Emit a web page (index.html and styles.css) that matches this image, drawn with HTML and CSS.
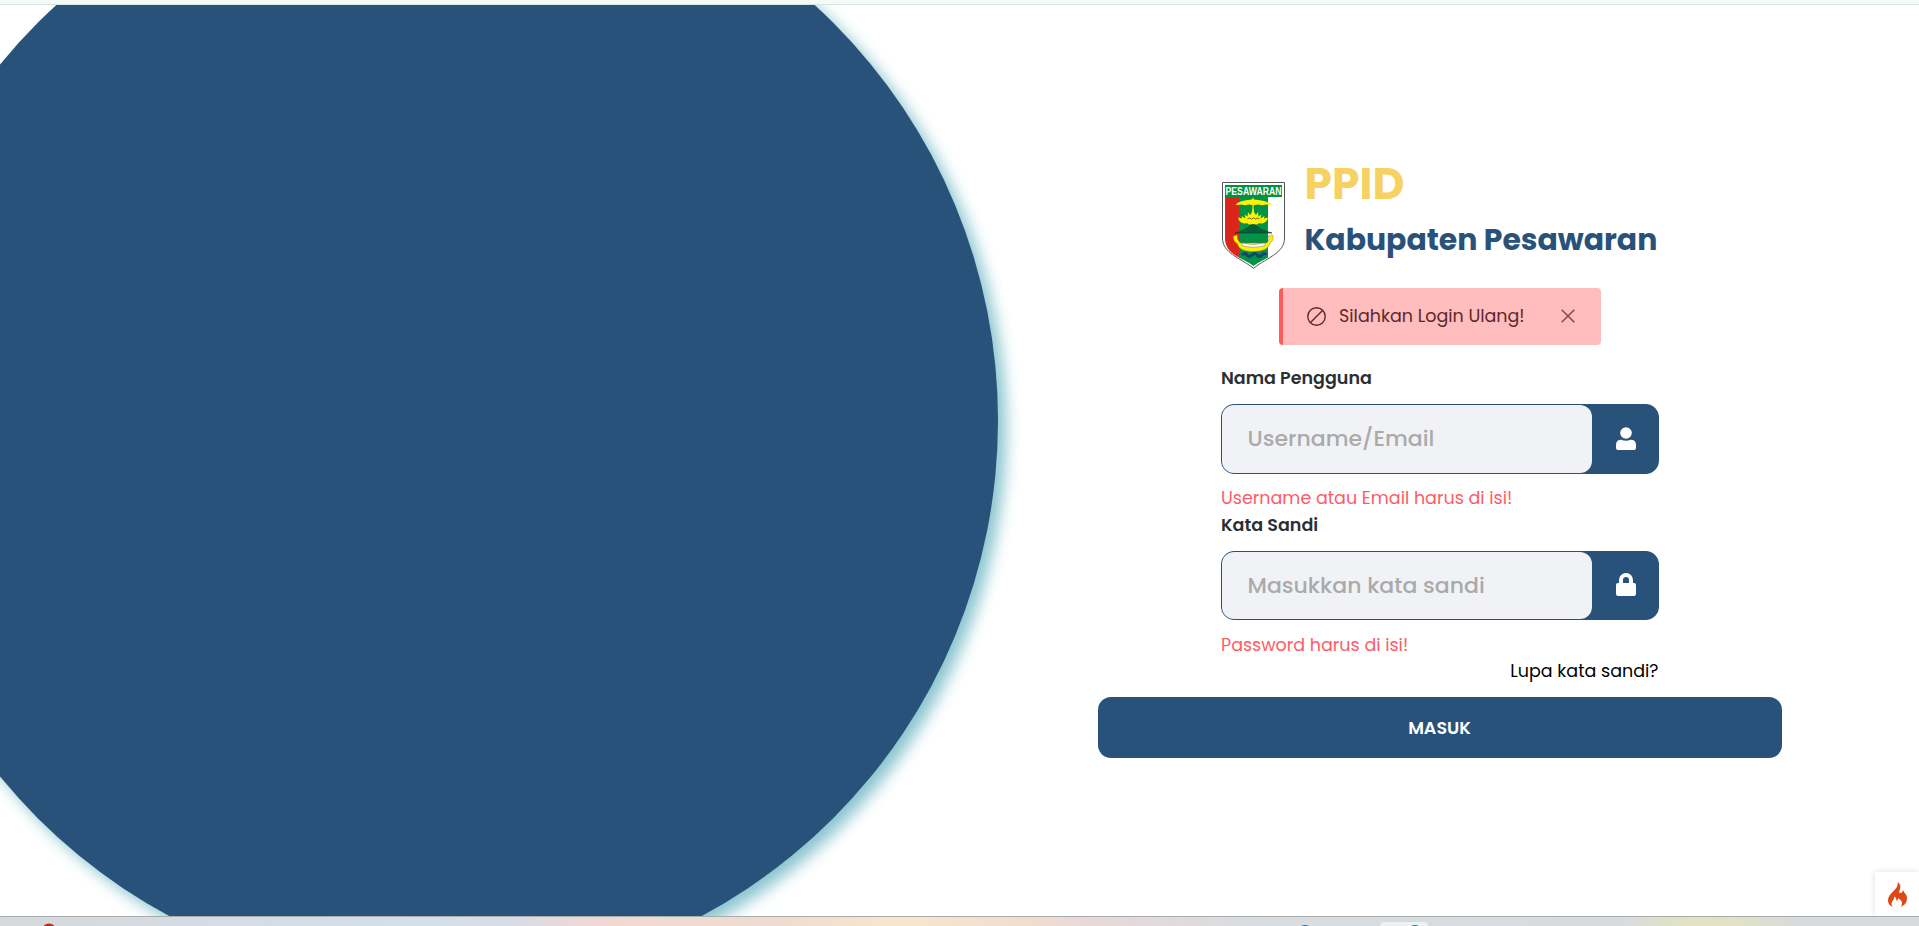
FILE: index.html
```html
<!DOCTYPE html>
<html lang="id">
<head>
<meta charset="utf-8">
<title>PPID Kabupaten Pesawaran</title>
<link rel="stylesheet" href="styles.css">
</head>
<body>
<div class="window-top"></div>
<main class="stage">
  <div class="disc"></div>
  <section class="panel">
    <header class="brand">
      <svg class="crest" viewBox="0 0 63 87">
        <path d="M.5.5h62V56C62.500 71 46 75 31.500 86.300 17 75 .500 71 .500 56z" fill="#fff" stroke="#555" stroke-width="1"/>
        <path d="M3 3h57v12H3z" fill="#009245"/>
        <path d="M3 15h14v60.500C8 71 3 65 3 56z" fill="#da251d"/>
        <path d="M17 15h29v60.500C41 78 36 80.500 31.500 84 27 80.500 22 78 17 75.500z" fill="#009245"/>
        <text class="crest-name" x="31.500" y="13.300" textLength="56" lengthAdjust="spacingAndGlyphs">PESAWARAN</text>
        <path d="M13.500 22.500Q17 18.500 30 17.500l1-2 1 2q13 1 18 5l-3 .5-3-.5-4 .8-4-.8-4.500.8-4.500-.8-4 .8-4-.8-3 .5z" fill="#fff200"/>
        <path d="M31 23v9" stroke="#fff200" stroke-width="1.200"/>
        <path d="M31 26l1.500 5 1.500 2 2-3 .5 4.500 3-2-1 4 4-2.500-.5 2.500 4-1q-1 5-6 6-3.500-1-5 1-2-.5-4 1-2-1.500-4-1-1.500-2-5-1-5-1-6-6l4 1-.5-2.500 4 2.500-1-4 3 2 .5-4.500 2 3 1.500-2z" fill="#fff200"/>
        <path d="M25.500 37l2-1 2 1 2-1 2 1 2-1 2 1" fill="none" stroke="#6d7418" stroke-width="1"/>
        <path d="M13 51q10-2 16.500-8.500h3Q40 49 50 51z" fill="#00603a" stroke="#17382a" stroke-width=".6"/>
        <path d="M11.500 54l4-1q-1 5 3 8h26q4-3 2-7l4-1q2 5-2.500 8-2 8.500-16.500 8.500T15.500 62q-5-3-4-8z" fill="#fff200" stroke="#a77b1c" stroke-width=".5"/>
        <path d="M20 61q11 3 23 0v2.500q-12 3.500-23 0z" fill="#fff" stroke="#777" stroke-width=".5"/>
        <path d="M20 73q3-3 5 0t5 0 5 0 5 0 4 0" fill="none" stroke="#164377" stroke-width="3"/>
      </svg>
      <div class="brand-text">
        <h1 class="brand-title">PPID</h1>
        <h2 class="brand-sub">Kabupaten Pesawaran</h2>
      </div>
    </header>
    <div class="alert">
      <svg class="alert-ban" viewBox="0 0 19 19"><circle cx="9.500" cy="9.500" r="8.700"/><path d="M3.500 15.500l12-12"/></svg>
      <span class="alert-text">Silahkan Login Ulang!</span>
      <svg class="alert-close" viewBox="0 0 14 14"><path d="M.7.7l12.600 12.600M13.300.7L.7 13.300"/></svg>
    </div>
    <form class="form">
      <label class="label">Nama Pengguna</label>
      <div class="field">
        <div class="input">Username/Email</div>
        <svg class="field-icon" viewBox="0 0 20 23"><circle cx="10" cy="6" r="5.800"/><path d="M5.300 12.800q4.700 2 9.400 0Q20 12.800 20 18v3q0 2-2 2H2q-2 0-2-2v-3q0-5.200 5.300-5.200z"/></svg>
      </div>
      <p class="error">Username atau Email harus di isi!</p>
      <label class="label label-next">Kata Sandi</label>
      <div class="field">
        <div class="input">Masukkan kata sandi</div>
        <svg class="field-icon" viewBox="0 0 20 23"><path fill-rule="evenodd" d="M3 10V7a7 7 0 0 1 14 0v3h1q2 0 2 2v9q0 2-2 2H2q-2 0-2-2v-9q0-2 2-2zm4 0h6V7a3 3 0 0 0-6 0z"/></svg>
      </div>
      <p class="error">Password harus di isi!</p>
      <a class="forgot">Lupa kata sandi?</a>
    </form>
    <button class="submit">MASUK</button>
  </section>
  <div class="debug-tab">
    <svg class="flame" viewBox="0 0 19 25"><path fill="#dd4814" d="M9.500 0C10.500 4 8 6.500 5 9.500 2 12.500 0 15 0 18.500 0 22 2 24 5 25 3.500 23.500 3.200 22 3.700 20.500 4.500 18.500 6.500 17.500 6 14.500 8 15.500 8.700 17 8.300 18.800 9.800 18.500 10.200 17.300 10 16.200 12.500 17.500 14.500 19.500 14 22 13.800 23.300 13.200 24.200 12.500 25 16.500 23.500 19 20.500 19 16.500 19 13.500 17.500 12 16.500 10.800 15.700 9.800 15.700 9 16 8.200 14.500 8.800 14 11 12.500 11 10.800 11 11 9.300 11.800 7.800 13 5 12.500 2 9.500 0z"/></svg>
  </div>
</main>
<footer class="taskbar">
  <svg class="taskbar-art" viewBox="0 0 1919 9"><circle cx="49" cy="14" r="7.500" fill="#c42b25"/><circle cx="1305" cy="15.500" r="7.500" fill="#1479c4"/><rect x="1380" y="5" width="48" height="20" rx="4" fill="#eef1f2"/><circle cx="1415" cy="15.500" r="7.500" fill="#38747c"/></svg>
</footer>
</body>
</html>
```

FILE: styles.css
```css
* { box-sizing: border-box; }
body { margin: 0; width: 1919px; height: 926px; overflow: hidden; display: flex; flex-direction: column; background: #fff; font-family: Poppins, Inter, "Open Sans", sans-serif; font-size: 17.500px; line-height: 24px; color: #2b2f33; }
h1, h2, p { margin: 0; }
.window-top { height: 5px; flex: none; background: #f4faf8; border-bottom: 1px solid #d6e6e2; }
.stage { height: 911px; flex: none; position: relative; overflow: hidden; display: flex; justify-content: flex-end; }
.disc { position: absolute; left: -127px; top: -147px; width: 1125px; height: 1125px; border-radius: 50%; background: #285279; box-shadow: 8px 8px 15px #8ac5cf; }
.panel { width: 959px; padding-top: 150.400px; display: flex; flex-direction: column; align-items: center; }
.brand { width: 438px; height: 113.600px; display: flex; gap: 20px; padding-left: 1px; }
.crest { width: 63px; height: 87px; margin-top: 26.600px; flex: none; overflow: visible; }
.crest-name { font: bold 11.500px "Liberation Sans", sans-serif; fill: #fff; text-anchor: middle; }
.brand-text { white-space: nowrap; }
.brand-title { font-size: 44px; line-height: 58px; font-weight: 700; color: #f6d263; }
.brand-sub { font-size: 29.920px; line-height: 54px; font-weight: 700; color: #285279; }
.alert { width: 322px; height: 57px; margin-top: 19px; display: flex; align-items: center; background: #ffbdbd; border-left: 4px solid #ff5b5b; border-radius: 4px; padding: 0 26px 0 24px; color: #5e2729; }
.alert-ban { width: 19px; height: 19px; margin-right: 13.500px; fill: none; stroke: #5e2729; stroke-width: 1.400; }
.alert-text { white-space: nowrap; }
.alert-close { width: 14px; height: 14px; margin-left: auto; fill: none; stroke: #80494b; stroke-width: 1.500; }
.form { width: 438px; margin-top: 21px; display: flex; flex-direction: column; }
.label { font-weight: 600; padding-left: .5px; }
.label-next { margin-top: 3px; }
.field { height: 69.500px; margin: 14.400px 0 12.500px; display: flex; align-items: center; border: 1px solid #285279; border-radius: 13px; background: #285279; }
.label-next + .field { margin-top: 13.500px; }
.input { width: 370px; height: 100%; display: flex; align-items: center; padding-left: 26px; border-radius: 12px; background: #f1f2f6; color: #aaa; font-size: 22px; font-weight: 500; white-space: nowrap; }
.field-icon { width: 20px; height: 23px; margin: 0 0 2px 24px; fill: #fff; }
.error { color: #ff5b66; padding-left: .5px; }
.forgot { align-self: flex-end; margin-top: 2px; color: #000; }
.submit { width: 684px; height: 61.500px; margin-top: 14px; border: 0; border-radius: 13px; background: #285279; color: #fff; font: inherit; font-weight: 600; }
.debug-tab { position: absolute; right: 0; bottom: 0; width: 44px; height: 44px; padding: 10px 0 0 13px; background: #fff; box-shadow: 0 0 6px #ddd; }
.flame { display: block; width: 19px; height: 25px; }
.taskbar { height: 10px; flex: none; border-top: 1px solid #a9acae; background: linear-gradient(90deg, #d6d9dc 0, #d4dfe8 430px, #dadce2 520px, #f0d9d2 600px, #efdcd0 780px, #f8e6cc 900px, #efdcd0 1040px, #e8d8d8 1090px, #d8dde1 1270px, #d8dbde 1620px, #e2e3c0 1690px, #e2e2c4 1730px, #d8dadd 1800px, #d9dadc 1919px); }
.taskbar-art { display: block; width: 1919px; height: 9px; }
```
